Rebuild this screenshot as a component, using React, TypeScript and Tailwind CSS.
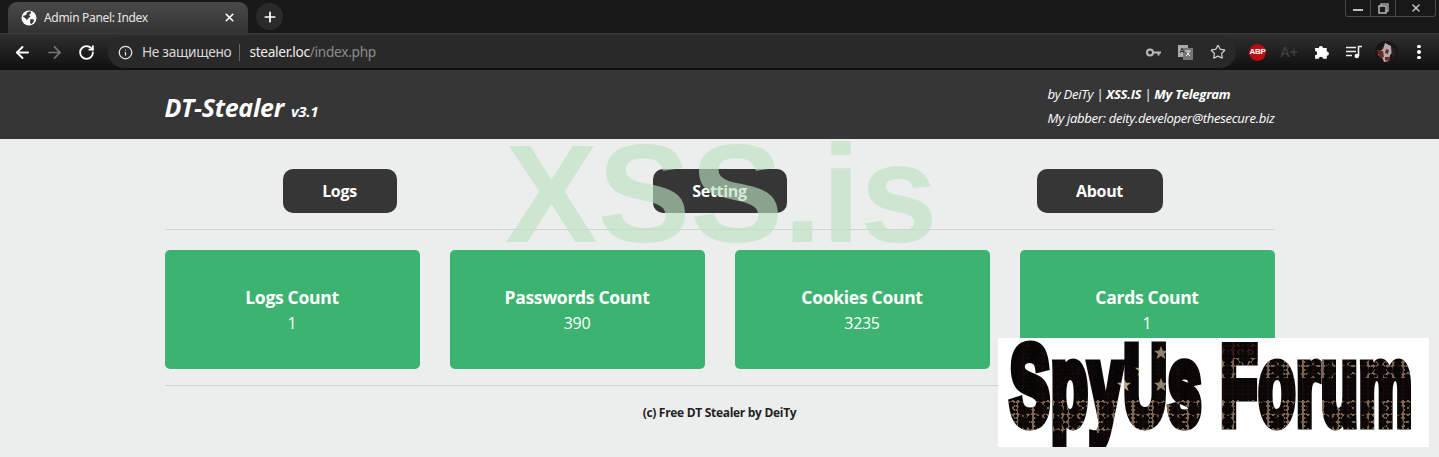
import React from "react";
import { ArrowLeft, ArrowRight, RotateCw, Info, Star, X, Plus } from "lucide-react";

const Globe = () => (
  <svg width="16" height="16" viewBox="0 0 16 16" className="shrink-0">
    <circle cx="8" cy="8" r="7.5" fill="#fff" />
    <path d="M1.5 6 L5 5 L6 2.5 L9.5 1 L10 3 L8 5 L9.5 6.5 L7.5 8 L6 10 L4 8 Z" fill="#3a3a3a" />
    <path d="M9.5 9 L13 9.5 L12.5 12 L10 14.5 L9 12 Z" fill="#3a3a3a" />
  </svg>
);

const Toolbar = () => (
  <div className="h-[37px] flex items-center bg-gradient-to-b from-[#303030] to-[#0f0f0f] border-t border-[#3a3a3a]">
    <div className="w-[108px] shrink-0 flex items-center text-white">
      <ArrowLeft size={19} strokeWidth={2.4} className="ml-[13px]" />
      <ArrowRight size={19} strokeWidth={2.2} className="ml-[13px] text-[#777]" />
      <RotateCw size={17} strokeWidth={2.6} className="ml-[14px]" />
    </div>
    <div className="w-[1128px] h-[32px] rounded-full bg-[#292929] flex items-center pl-[10px] font-['Noto_Sans',sans-serif] text-[13.700px]">
      <Info size={15} strokeWidth={2} className="text-[#e8e8e8]" />
      <span className="ml-[9px] text-[#d8d8d8]">Не защищено</span>
      <span className="ml-[8px] mr-[9px] h-[17px] w-px bg-[#666]" />
      <span className="text-[#eee]">stealer.loc</span>
      <span className="text-[#8c8c8c]">/index.php</span>
      <div className="ml-auto flex items-center pr-[10px]">
        <svg width="15" height="9" viewBox="0 0 15 9">
          <circle cx="4" cy="4.5" r="3" fill="none" stroke="#bbb" strokeWidth="2" />
          <path d="M7 3.500h8v2h-1.500v2h-2v-2H7z" fill="#bbb" />
        </svg>
        <svg width="15" height="15" viewBox="0 0 15 15" className="ml-[17px]">
          <rect x="0" y="0" width="10" height="12" fill="#aaa" />
          <rect x="5" y="3" width="10" height="12" fill="#777" />
          <path d="M7.500 6h5M10 6v1.500M8 11l3.500-3.500M9 8l3 3" stroke="#eee" fill="none" strokeWidth="1" />
          <path d="M2 8l2-5 2 5M3 6.500h2" stroke="#333" fill="none" strokeWidth="1" />
        </svg>
        <Star size={16} strokeWidth={1.8} className="ml-[17px] text-[#d0d0d0]" />
      </div>
    </div>
    <div className="flex-1 flex items-center text-white">
      <div className="ml-[13px] w-[17px] h-[17px] rounded-full bg-[#b80d14] flex items-center justify-center">
        <span className="font-['Liberation_Sans',sans-serif] font-bold text-[8px] leading-none text-white">ABP</span>
      </div>
      <span className="ml-[14px] w-[18px] font-['Liberation_Sans',sans-serif] font-bold text-[14px] leading-none text-[#3b3b3b]">A+</span>
      <svg width="17" height="17" viewBox="0 0 16 16" className="ml-[16px]">
        <path d="M1 5h3.500a2 2 0 1 1 4 0H12v3.500a2 2 0 1 1 0 4V15.500H8.500a2 2 0 1 0-4 0H1v-3.500a2 2 0 1 0 0-4z" fill="#fff" transform="translate(0 -1) scale(1 .96)" />
      </svg>
      <svg width="16" height="14" viewBox="0 0 16 14" className="ml-[15px]">
        <path d="M0 2.500h10M0 6.500h10M0 10.500h6" stroke="#eee" strokeWidth="1.600" />
        <path d="M12.500 11V1.500H16" stroke="#eee" strokeWidth="1.600" fill="none" />
        <circle cx="10.800" cy="11" r="2.300" fill="#eee" />
      </svg>
      <svg width="23" height="23" viewBox="0 0 23 23" className="ml-[13px]">
        <circle cx="11.500" cy="11.500" r="11.500" fill="#1c1616" />
        <path d="M10 2l6 3 2 6-3 3-1 6-5 1-2-5-4-2 2-4 3-2z" fill="#b7aaa6" />
        <path d="M2 9l6 1 1 6-4 1zM11 8l3 1-1 4-3-1zM10 16h5l-1 4-4-1z" fill="#6a2a2a" />
        <path d="M16 5l4 3 1 5-4 5z" fill="#2a1e1e" />
      </svg>
      <div className="ml-[19px] flex flex-col gap-[2px]">
        <span className="w-[3.500px] h-[3.500px] rounded-full bg-white" />
        <span className="w-[3.500px] h-[3.500px] rounded-full bg-white" />
        <span className="w-[3.500px] h-[3.500px] rounded-full bg-white" />
      </div>
    </div>
  </div>
);

const Browser = () => (
  <div className="h-[70px] bg-[#181818] flex flex-col">
    <div className="h-[33px] relative flex items-end">
      <div className="ml-[8px] w-[240px] h-[31px] rounded-t-[9px] bg-gradient-to-b from-[#4a4a4a] to-[#333333] flex items-center pl-[13px] pr-[12px]">
        <Globe />
        <span className="ml-[7px] text-[12px] text-[#e6e6e6] font-['Noto_Sans',sans-serif]">Admin Panel: Index</span>
        <X size={13} strokeWidth={3} className="ml-auto text-white" />
      </div>
      <div className="ml-[8px] mb-[3px] w-[27px] h-[27px] rounded-full bg-[#2a2a2a] flex items-center justify-center">
        <Plus size={16} strokeWidth={2.6} className="text-white" />
      </div>
      <div className="absolute right-[3px] top-0 h-[17px] w-[91px] flex border border-t-0 border-[#4a4a4a] rounded-b-[3px] text-[#b8b8b8]">
        <div className="w-[25px] flex items-center justify-center border-r border-[#4a4a4a]">
          <span className="w-[10px] h-[2px] bg-[#c0c0c0] mt-[3px]" />
        </div>
        <div className="w-[25px] flex items-center justify-center border-r border-[#4a4a4a]">
          <svg width="11" height="11" viewBox="0 0 11 11">
            <rect x="3" y="1" width="7" height="7" fill="none" stroke="#b8b8b8" strokeWidth="1.300" />
            <rect x="1" y="3" width="7" height="7" fill="#1a1a1a" stroke="#b8b8b8" strokeWidth="1.500" />
          </svg>
        </div>
        <div className="flex-1 flex items-center justify-center">
          <X size={12} strokeWidth={3} className="text-[#c4c4c4]" />
        </div>
      </div>
    </div>
    <Toolbar />
  </div>
);

const NavButton = ({ label, w }: { label: string; w: string }) => (
  <div className="flex justify-center">
    <a className={`${w} h-[44px] rounded-[10px] bg-[#363636] text-white font-bold text-[16px] flex items-center justify-center`}>{label}</a>
  </div>
);

const Card = ({ title, value }: { title: string; value: string }) => (
  <div className="h-[119px] rounded-[5px] bg-[#3cb371] text-white flex flex-col items-center justify-center">
    <div className="font-bold text-[17.500px] leading-[26px]">{title}</div>
    <div className="text-[16px] leading-[26px]">{value}</div>
  </div>
);

const StarMark = ({ x, y, fill }: { x: number; y: number; fill: string }) => (
  <polygon
    fill={fill}
    transform={`translate(${x} ${y})`}
    points="0,-7 2,-2.200 7,-2.200 3,1 4.500,6 0,3 -4.500,6 -3,1 -7,-2.200 -2,-2.200"
  />
);

const Logo = () => (
  <div className="absolute left-[998px] top-[338px] w-[431px] h-[109px] bg-white overflow-hidden isolate">
    <div className="absolute left-[12px] top-[-22px] w-[780px] origin-top-left scale-x-[0.53] font-['Liberation_Sans',sans-serif] font-bold text-[112px] leading-[140px] whitespace-pre tracking-[3px] text-[#070505] [-webkit-text-stroke:11px_#070505]">
      SpyUs Forum
    </div>
    <div className="absolute inset-0 mix-blend-lighten bg-[radial-gradient(circle,#080505_0_42%,transparent_55%),radial-gradient(circle,#0b0706_0_38%,transparent_52%),radial-gradient(circle,#140b09_0_46%,transparent_60%),linear-gradient(90deg,#060606_0_100%),linear-gradient(180deg,#33191a_0_20px,#7a6353_20px_40px,#140a08_40px_62px,#7f6853_62px_95px,#070505_95px)] [background-size:5px_4px,9px_7px,17px_13px,218px_62px,100%_100%] [background-repeat:repeat,repeat,repeat,no-repeat,repeat]">
      <svg width="431" height="109" viewBox="0 0 431 109" className="absolute left-0 top-0">
        <StarMark x={126} y={47} fill="#b9a78c" />
        <StarMark x={144} y={32} fill="#b9a78c" />
        <StarMark x={163} y={15} fill="#8f8070" />
        <StarMark x={163} y={47} fill="#8f8070" />
      </svg>
    </div>
  </div>
);

export default function App() {
  return (
    <div className="relative h-[457px] w-[1439px] overflow-hidden bg-[#eceeed] font-['Open_Sans','Noto_Sans',sans-serif] tracking-[-0.3px]">
      <Browser />
      <header className="h-[69px] bg-[#363636] text-white">
        <div className="w-[1110px] mx-auto flex justify-between">
          <div className="italic font-bold mt-[20px] leading-[34px]">
            <span className="text-[25px]">DT-Stealer</span>
            <span className="text-[15px] ml-[7px]">v3.1</span>
          </div>
          <div className="w-[227px] italic text-[13.100px] mt-[12px] leading-[24px] whitespace-nowrap">
            <div>by DeiTy | <b>XSS.IS</b> | <b>My Telegram</b></div>
            <div>My jabber: deity.developer@thesecure.biz</div>
          </div>
        </div>
      </header>
      <main className="w-[1140px] mx-auto px-[15px]">
        <div className="-mx-[15px] grid grid-cols-3 pt-[30px] pb-[16px]">
          <NavButton label="Logs" w="w-[114px]" />
          <NavButton label="Setting" w="w-[134px]" />
          <NavButton label="About" w="w-[126px]" />
        </div>
        <div className="h-px bg-[#d2d4d3]" />
        <div className="grid grid-cols-4 gap-[30px] pt-[20px] pb-[16px]">
          <Card title="Logs Count" value="1" />
          <Card title="Passwords Count" value="390" />
          <Card title="Cookies Count" value="3235" />
          <Card title="Cards Count" value="1" />
        </div>
        <div className="h-px bg-[#d2d4d3]" />
        <div className="pt-[18px] text-center font-bold text-[12px] leading-[18px] text-[#222]">(c) Free DT Stealer by DeiTy</div>
      </main>
      <div className="absolute left-[505px] top-[114px] pointer-events-none font-['Liberation_Sans',sans-serif] font-bold text-[139px] leading-[160px] tracking-normal text-[rgba(186,226,192,0.64)]">XSS.is</div>
      <Logo />
    </div>
  );
}
